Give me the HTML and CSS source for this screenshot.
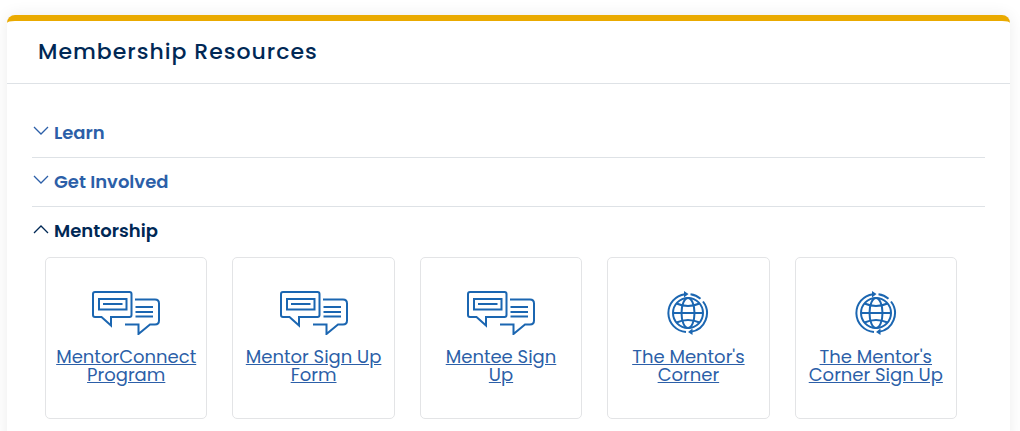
FILE: index.html
```html
<!DOCTYPE html>
<html lang="en">
<head>
  <meta charset="UTF-8">
  <meta name="viewport" content="width=device-width, initial-scale=1">
  <title>Membership Resources</title>
  <link rel="stylesheet" href="styles.css">
</head>
<body>
  <!-- shared icons -->
  <svg class="sprite" aria-hidden="true">
    <symbol id="icon-chevron" viewBox="0 0 16 10">
      <path d="M1 1l7 7 7-7"/>
    </symbol>
    <symbol id="icon-chat" viewBox="0 0 68 44">
      <path d="M3 1h34.500a2 2 0 0 1 2 2v21a2 2 0 0 1-2 2H19v8.500L9.500 26H3a2 2 0 0 1-2-2V3a2 2 0 0 1 2-2z"/>
      <path d="M7 8h27.500v10.500H7zM11 13h19.500"/>
      <path d="M43 8.500h20q4 0 4 4v17q0 4-4 4h-5L46.500 43v-9.500H33"/>
      <path d="M43.500 16H61M43.500 21H61M43.500 25.500H61"/>
    </symbol>
    <symbol id="icon-globe" viewBox="0 0 42 44">
      <circle cx="21" cy="22" r="15"/>
      <ellipse cx="21" cy="22" rx="6.500" ry="15"/>
      <path d="M6 22h30M9.500 12.500Q21 17.500 32.500 12.500M9.500 31.500Q21 26.500 32.500 31.500"/>
      <path d="M19 41A19 19 0 0 1 18 3.200M23.500 3.200A19 19 0 0 1 33.500 7.700M36 10.500A19 19 0 0 1 24 40.800"/>
      <path class="arrow" d="M17 0l4.500 3-4.500 3.500zM25.500 37.500l-4.500 3.500 4.500 3z"/>
    </symbol>
  </svg>

  <section class="card">
    <header class="card-header">
      <h1>Membership Resources</h1>
    </header>

    <div class="card-body">
      <details class="group">
        <summary><svg class="chevron"><use href="#icon-chevron"/></svg>Learn</summary>
      </details>
      <details class="group">
        <summary><svg class="chevron"><use href="#icon-chevron"/></svg>Get Involved</summary>
      </details>
      <details class="group" open>
        <summary><svg class="chevron"><use href="#icon-chevron"/></svg>Mentorship</summary>
        <div class="tiles">
          <a class="tile" href="#"><svg class="icon-chat"><use href="#icon-chat"/></svg><span>MentorConnect Program</span></a>
          <a class="tile" href="#"><svg class="icon-chat"><use href="#icon-chat"/></svg><span>Mentor Sign Up Form</span></a>
          <a class="tile" href="#"><svg class="icon-chat"><use href="#icon-chat"/></svg><span>Mentee Sign Up</span></a>
          <a class="tile" href="#"><svg class="icon-globe"><use href="#icon-globe"/></svg><span>The Mentor's Corner</span></a>
          <a class="tile" href="#"><svg class="icon-globe"><use href="#icon-globe"/></svg><span>The Mentor's Corner Sign Up</span></a>
        </div>
      </details>
    </div>
  </section>
</body>
</html>
```

FILE: styles.css
```css
* { box-sizing: border-box; }
body {
  margin: 0;
  padding: 15px 10px 15px 7px;
  background: #fff;
  color: #002855;
  font-family: Poppins, Inter, sans-serif;
}
.sprite { position: absolute; width: 0; height: 0; }
svg { fill: none; stroke: currentColor; }

.card {
  background: #fff;
  border-top: 6px solid #eaaa00;
  border-radius: 8px;
  box-shadow: 0 0 16px rgba(0, 0, 0, 0.08);
}
.card-header {
  padding: 15px 31px;
  border-bottom: 1px solid #dee2e6;
}
.card-header h1 {
  margin: 0;
  font-size: 22px;
  line-height: 32px;
  font-weight: 500;
  letter-spacing: 1px;
}
.card-body { padding: 25px; }

.group { border-bottom: 1px solid #dee2e6; }
.group:last-child { border-bottom: 0; }
.group summary {
  display: flex;
  align-items: center;
  gap: 5px;
  height: 48px;
  padding: 0 0 2px 1px;
  list-style: none;
  cursor: pointer;
  color: #2c5fa8;
  font-size: 18px;
  font-weight: 600;
}
.group[open] summary { color: #002855; }
.chevron {
  width: 16px;
  height: 10px;
  margin-bottom: 2px;
  stroke-width: 1.3;
}
.group[open] .chevron { transform: rotate(180deg); }

.tiles {
  display: grid;
  grid-template-columns: repeat(5, minmax(0, 1fr));
  gap: 25px;
  padding: 2px 28px 0 13px;
}
.tile {
  display: flex;
  flex-direction: column;
  align-items: center;
  justify-content: center;
  gap: 13px;
  aspect-ratio: 1;
  padding: 0 11px 2px;
  border: 1px solid #e3e4e6;
  border-radius: 5px;
  color: #2c5fa8;
  font-size: 18px;
  line-height: 18px;
  font-weight: 400;
  text-align: center;
}
.tile svg {
  height: 44px;
  color: #1b66b1;
  stroke-width: 2;
}
.icon-chat { width: 68px; }
.icon-globe { width: 42px; }
.arrow { fill: currentColor; stroke: none; }
```
